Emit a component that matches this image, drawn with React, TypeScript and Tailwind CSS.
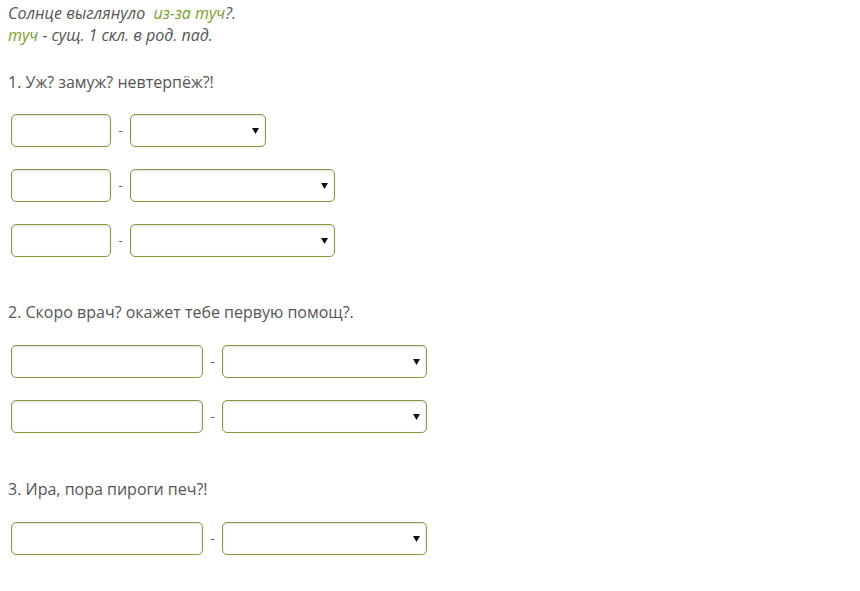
import React from "react";

const Input = ({ w }: { w: string }) => (
  <div className={`${w} h-[33px] rounded-[5px] border border-[#7f9c3f] bg-white shadow-[inset_0_1px_3px_rgba(0,0,0,0.12)]`} />
);

const Select = ({ w }: { w: string }) => (
  <div className={`${w} h-[33px] rounded-[5px] border border-[#7f9c3f] bg-white shadow-[inset_0_1px_3px_rgba(0,0,0,0.12)] flex items-center justify-end pr-[6px]`}>
    <svg width="7" height="7" viewBox="0 0 7 7"><polygon points="0,1 7,1 3.5,7" fill="#111" /></svg>
  </div>
);

const Row = ({ iw, sw }: { iw: string; sw: string }) => (
  <div className="flex items-center">
    <Input w={iw} />
    <span className="w-[19px] text-center text-[13px] text-[#555]">-</span>
    <Select w={sw} />
  </div>
);

export default function App() {
  return (
    <div className="min-h-[591px] bg-white text-[#555] px-[8px] pt-[2px]" style={{ fontFamily: '"Open Sans", sans-serif' }}>
      <div className="text-[16px] leading-[22px] italic">
        <div>Солнце выглянуло&nbsp; <span className="text-[#7a9e34]">из-за туч</span>?.</div>
        <div><span className="text-[#7a9e34]">туч</span> - сущ. 1 скл. в род. пад.</div>
      </div>

      <div className="mt-[25px] text-[16px] leading-[22px]">1. Уж? замуж? невтерпёж?!</div>
      <div className="mt-[21px] pl-[3px] flex flex-col gap-[22px]">
        <Row iw="w-[100px]" sw="w-[136px]" />
        <Row iw="w-[100px]" sw="w-[205px]" />
        <Row iw="w-[100px]" sw="w-[205px]" />
      </div>

      <div className="mt-[44px] text-[16px] leading-[22px]">2. Скоро врач? окажет тебе первую помощ?.</div>
      <div className="mt-[22px] pl-[3px] flex flex-col gap-[22px]">
        <Row iw="w-[192px]" sw="w-[205px]" />
        <Row iw="w-[192px]" sw="w-[205px]" />
      </div>

      <div className="mt-[45px] text-[16px] leading-[22px]">3. Ира, пора пироги печ?!</div>
      <div className="mt-[22px] pl-[3px] flex flex-col gap-[22px]">
        <Row iw="w-[192px]" sw="w-[205px]" />
      </div>
    </div>
  );
}
